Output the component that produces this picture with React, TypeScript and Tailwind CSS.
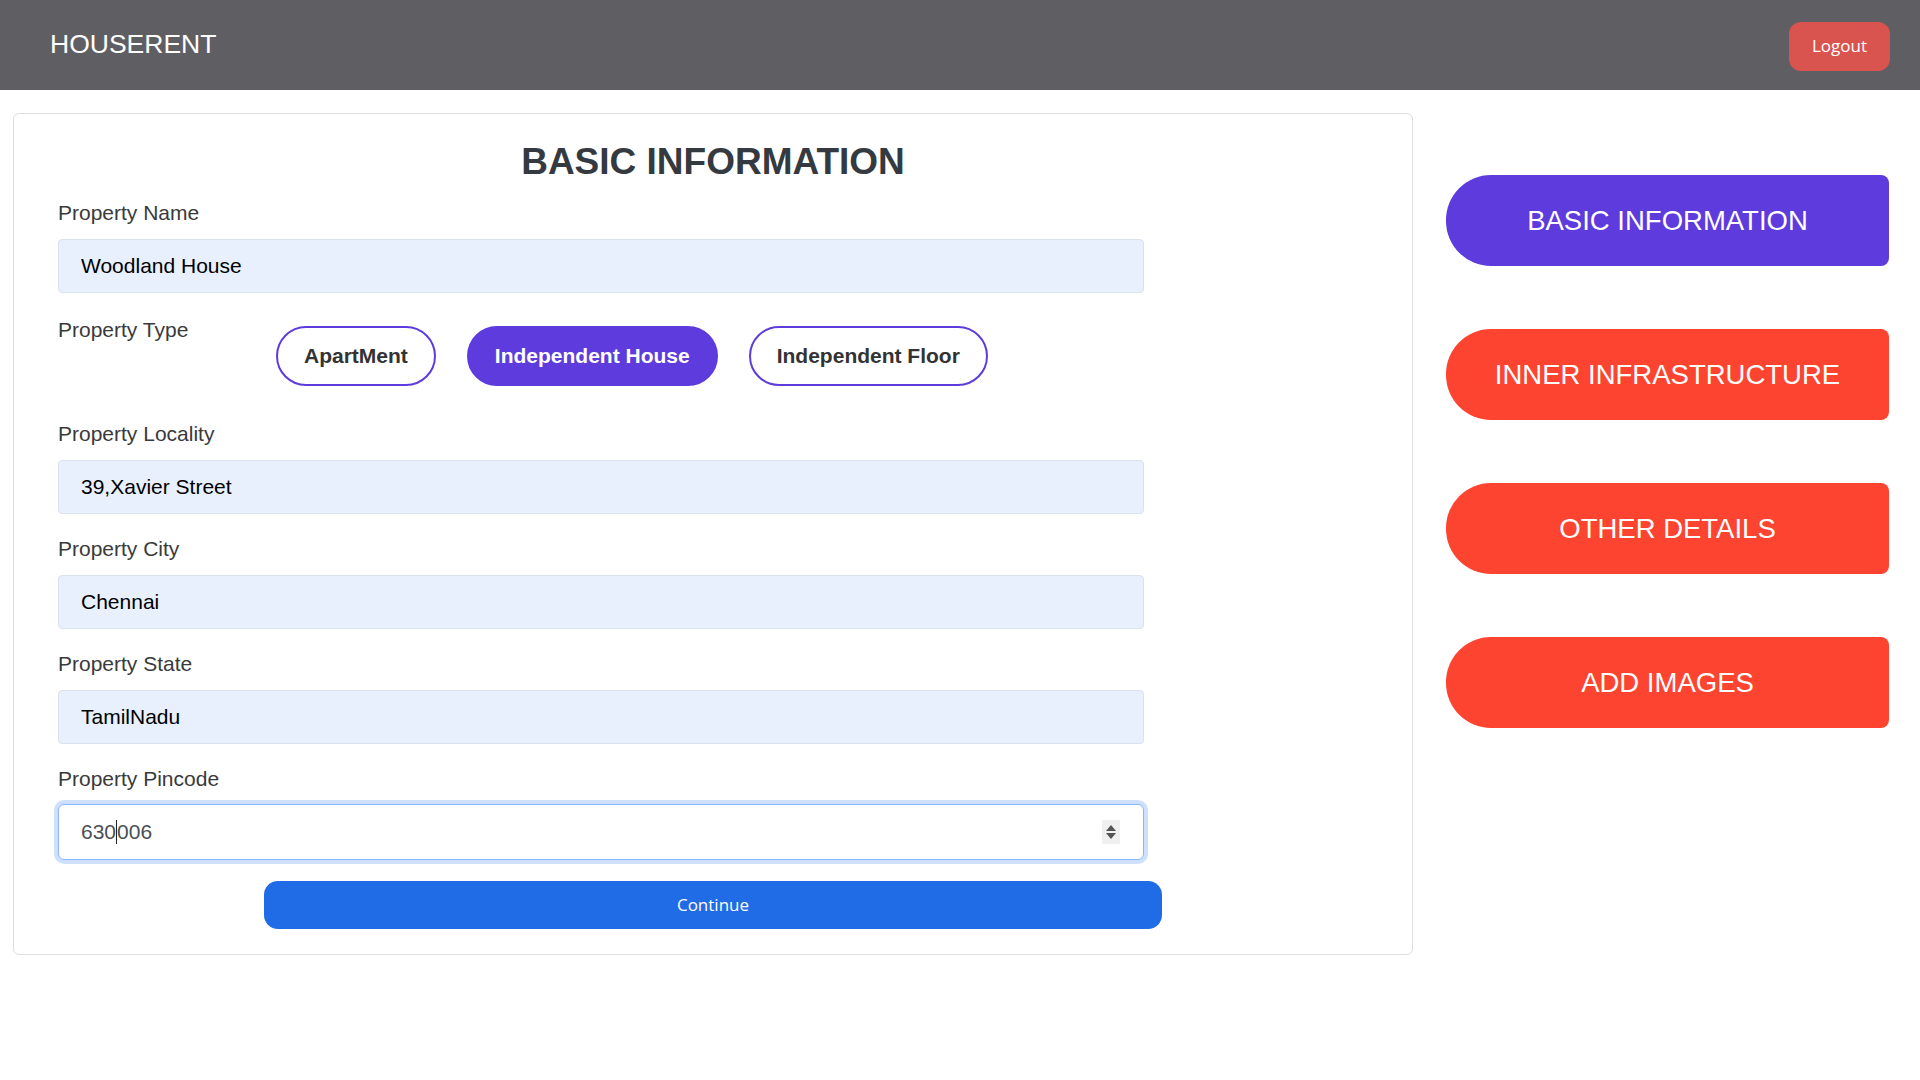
import React from 'react';

const sans = "font-['Liberation_Sans',Arial,sans-serif]";

const Field = ({ label, value, className = '' }: { label: string; value: string; className?: string }) => (
  <div className={className}>
    <label className="block text-[21px] leading-[24px] text-[#3a3a3a]">{label}</label>
    <input
      readOnly
      defaultValue={value}
      className="mt-[14px] block h-[54px] w-[1086px] rounded-[4px] border border-[#dbe2ec] bg-[#e8f0fe] px-[22px] text-[21px] text-black outline-none"
    />
  </div>
);

const TypeButton = ({ label, active }: { label: string; active?: boolean }) => (
  <button
    className={
      active
        ? 'h-[60px] rounded-full border-2 border-[#5e3bdd] bg-[#5e3bdd] px-[26px] text-[21px] font-bold text-white'
        : 'h-[60px] rounded-full border-2 border-[#5e3bdd] bg-white px-[26px] text-[21px] font-bold text-[#333]'
    }
  >
    {label}
  </button>
);

const StepButton = ({ label, active }: { label: string; active?: boolean }) => (
  <button
    className={
      'flex h-[91px] w-[443px] items-center justify-center rounded-l-[45px] rounded-r-[8px] text-[27.5px] text-white ' +
      (active ? 'bg-[#5e3bdd]' : 'bg-[#fd4430]')
    }
  >
    {label}
  </button>
);

export default function App() {
  return (
    <div className={`min-h-screen bg-white ${sans}`}>
      <header className="flex h-[90px] items-center justify-between bg-[#5f5e63] pl-[50px] pr-[30px]">
        <span className="text-[26.5px] text-white">HOUSERENT</span>
        <button className="mt-[2px] h-[49px] w-[101px] rounded-[12px] bg-[#d9534f] font-['Open_Sans',sans-serif] text-[17px] text-white">
          Logout
        </button>
      </header>

      <main className="flex items-start pl-[13px] pt-[23px]">
        <section className="w-[1400px] rounded-[6px] border border-[#dedede] pb-[25px] pt-[26px]">
          <h1 className="text-center text-[37px] font-bold leading-[43px] text-[#343a40]">BASIC INFORMATION</h1>

          <form className="pl-[44px]" onSubmit={e => e.preventDefault()}>
            <Field label="Property Name" value="Woodland House" className="mt-[18px]" />

            <div className="mt-[25px] flex items-start">
              <label className="w-[218px] text-[21px] leading-[24px] text-[#3a3a3a]">Property Type</label>
              <div className="mt-[8px] flex gap-[31px]">
                <TypeButton label="ApartMent" />
                <TypeButton label="Independent House" active />
                <TypeButton label="Independent Floor" />
              </div>
            </div>

            <Field label="Property Locality" value="39,Xavier Street" className="mt-[36px]" />
            <Field label="Property City" value="Chennai" className="mt-[23px]" />
            <Field label="Property State" value="TamilNadu" className="mt-[23px]" />

            <div className="mt-[23px]">
              <label className="block text-[21px] leading-[24px] text-[#3a3a3a]">Property Pincode</label>
              <div className="relative mt-[13px] flex h-[56px] w-[1086px] items-center rounded-[6px] border border-[#86b7fe] bg-white px-[22px] text-[21px] text-[#495057] shadow-[0_0_0_4px_#cfe0fb]">
                <span>630</span>
                <span className="inline-block h-[24px] w-px bg-[#222]" />
                <span>006</span>
                <div className="absolute right-[23px] top-[15px] flex h-[24px] w-[18px] flex-col items-center justify-center gap-[2px] bg-[#f0f0f0]">
                  <svg width="10" height="6" viewBox="0 0 10 6"><path d="M5 0L10 6H0Z" fill="#555" /></svg>
                  <svg width="10" height="6" viewBox="0 0 10 6"><path d="M0 0H10L5 6Z" fill="#555" /></svg>
                </div>
              </div>
            </div>
          </form>

          <button className="mx-auto mt-[21px] block h-[48px] w-[898px] rounded-[14px] bg-[#206be6] font-['Open_Sans',sans-serif] text-[17px] text-white">
            Continue
          </button>
        </section>

        <aside className="ml-[33px] flex flex-col gap-[63px] pt-[62px]">
          <StepButton label="BASIC INFORMATION" active />
          <StepButton label="INNER INFRASTRUCTURE" />
          <StepButton label="OTHER DETAILS" />
          <StepButton label="ADD IMAGES" />
        </aside>
      </main>
    </div>
  );
}
